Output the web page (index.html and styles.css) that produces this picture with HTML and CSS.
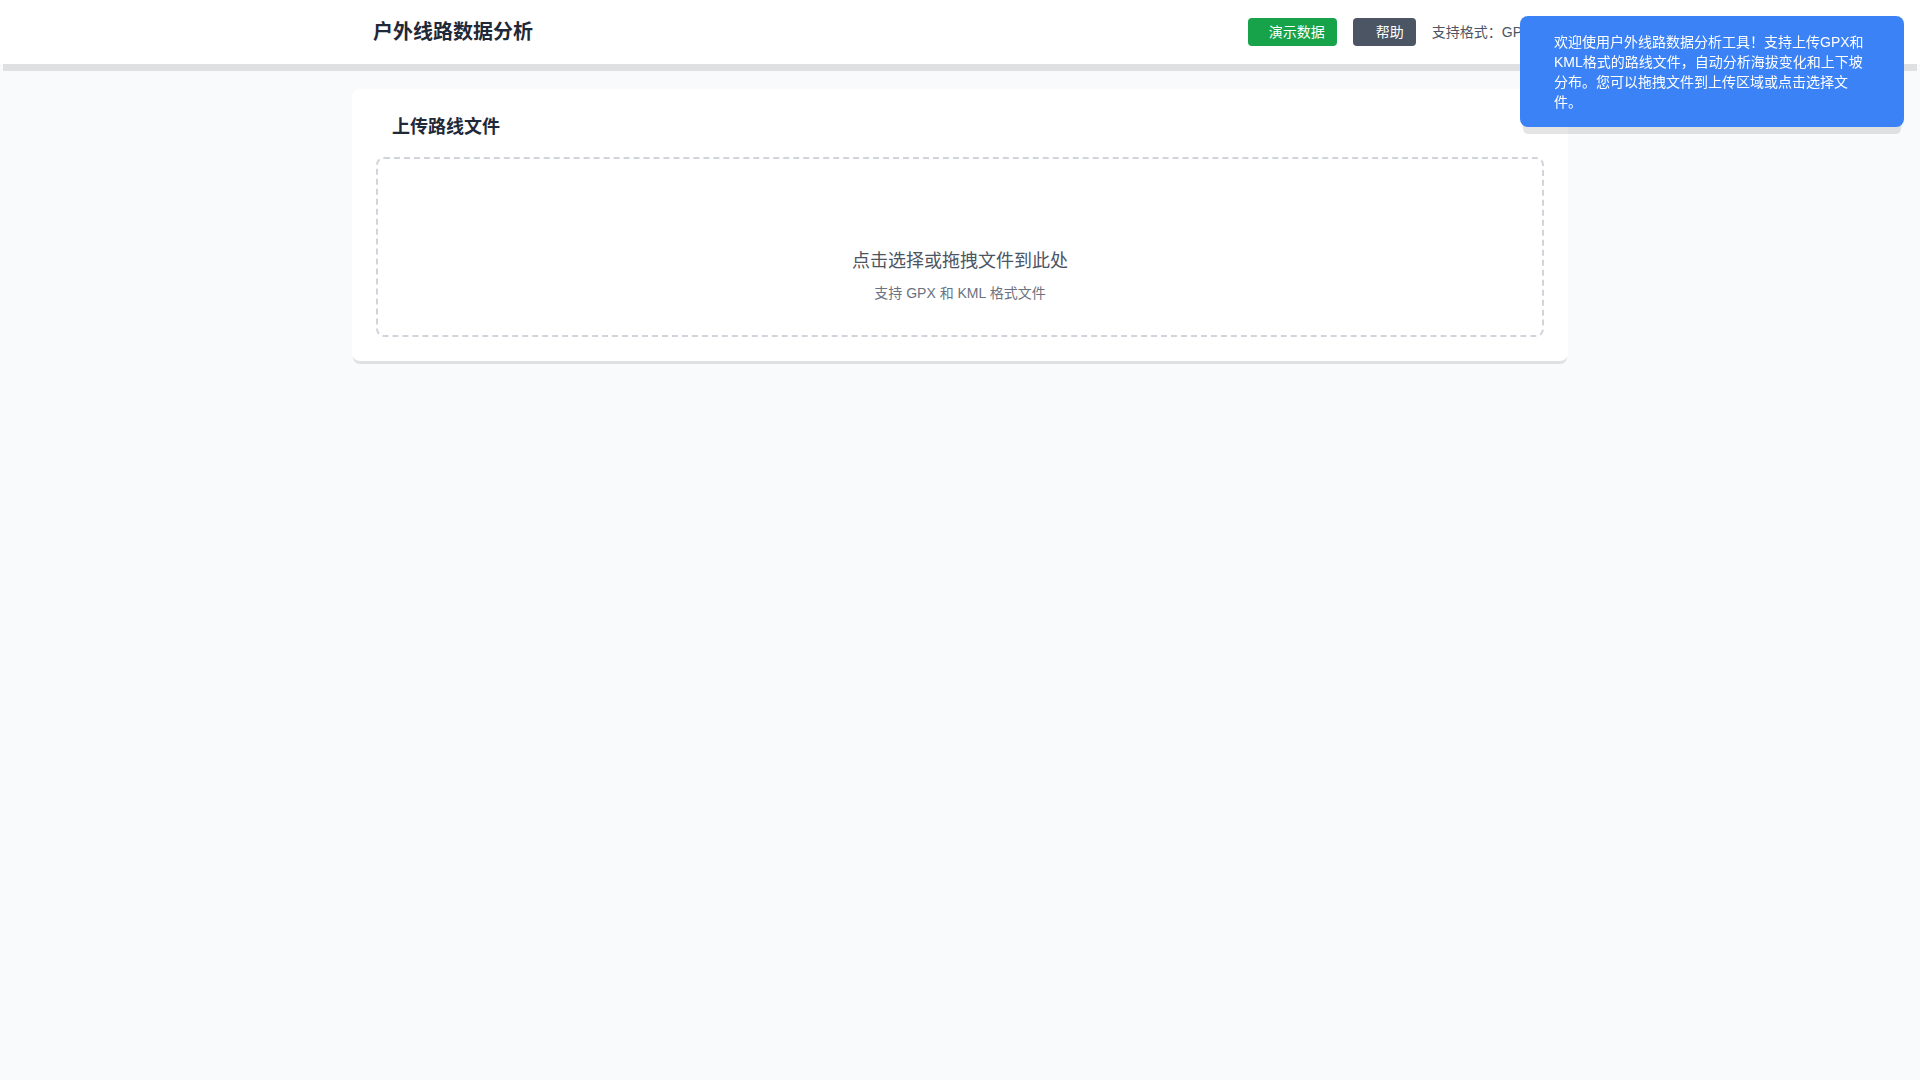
FILE: index.html
```html
<!DOCTYPE html>
<html>
<head>
	<title>户外线路数据分析</title>
	<meta charset="utf-8"/>
	<link rel="stylesheet" href="styles.css">
</head>
<body>

<div class="header">
	<div class="header-inner">
		<h1 class="logo"><i class="icon"></i>户外线路数据分析</h1>
		<div class="actions">
			<button class="btn btn-demo"><i class="icon"></i>演示数据</button>
			<button class="btn btn-help"><i class="icon"></i>帮助</button>
			<span class="formats">支持格式：GPX, KML</span>
		</div>
	</div>
</div>

<div class="main">
	<div class="card">
		<h2 class="card-title"><i class="icon"></i>上传路线文件</h2>
		<div class="drop">
			<div class="drop-icon"></div>
			<p class="drop-text">点击选择或拖拽文件到此处</p>
			<p class="drop-hint">支持 GPX 和 KML 格式文件</p>
		</div>
	</div>
</div>

<div class="toast">
	<i class="icon"></i>
	<p class="toast-text">欢迎使用户外线路数据分析工具！支持上传GPX和KML格式的路线文件，自动分析海拔变化和上下坡分布。您可以拖拽文件到上传区域或点击选择文件。</p>
</div>

</body>
</html>
```

FILE: styles.css
```css
* {
	margin: 0px;
	padding: 0px;
	box-sizing: border-box;
}

body {
	font-family: "Liberation Sans", "Noto Sans CJK SC", sans-serif;
	background-color: #f9fafb;
	color: #1f2937;
	min-height: 100vh;
}

.icon {
	display: inline-block;
}

/* 顶部栏 */
.header {
	background-color: #fff;
	box-shadow: 0 10px 0 -3px rgba(0, 0, 0, 0.1), 0 4px 0 -4px rgba(0, 0, 0, 0.1);
	position: relative;
	z-index: 1;
}
	.header-inner {
		max-width: 1280px;
		height: 64px;
		margin: 0 auto;
		padding: 0 32px;
		display: flex;
		align-items: center;
		justify-content: space-between;
	}
	.logo {
		font-size: 20px;
		line-height: 28px;
		font-weight: bold;
		color: #1f2937;
		padding-left: 21px;
	}
	.actions {
		display: flex;
		align-items: center;
	}
		.btn {
			font-family: inherit;
			font-size: 14px;
			line-height: 20px;
			color: #fff;
			border: none;
			border-radius: 4px;
			padding: 4px 12px 4px 21px;
			margin-right: 16px;
		}
		.btn-demo {
			background-color: #16a34a;
		}
		.btn-help {
			background-color: #4b5563;
			padding-left: 23px;
		}
		.formats {
			font-size: 14px;
			line-height: 20px;
			color: #4b5563;
		}

/* 主体 */
.main {
	max-width: 1280px;
	margin: 0 auto;
	padding: 25px 32px;
}
	.card {
		background-color: #fff;
		border-radius: 8px;
		padding: 24px;
		box-shadow: 0 4px 0 -1px rgba(0, 0, 0, 0.1), 0 2px 0 -2px rgba(0, 0, 0, 0.1);
	}
		.card-title {
			font-size: 18px;
			line-height: 28px;
			font-weight: bold;
			color: #1f2937;
			padding-left: 16px;
			margin-bottom: 16px;
		}
		.drop {
			border: 2px dashed #d1d5db;
			border-radius: 8px;
			padding: 32px;
			text-align: center;
		}
			.drop-icon {
				height: 40px;
				margin-bottom: 16px;
			}
			.drop-text {
				font-size: 18px;
				line-height: 28px;
				color: #4b5563;
				margin-bottom: 8px;
			}
			.drop-hint {
				font-size: 14px;
				line-height: 20px;
				color: #6b7280;
			}

/* 提示框 */
.toast {
	position: fixed;
	top: 16px;
	right: 16px;
	width: 384px;
	z-index: 20;
	display: flex;
	align-items: flex-start;
	background-color: #3b82f6;
	color: #fff;
	border-radius: 8px;
	padding: 16px 16px 15px 34px;
	box-shadow: 0 10px 0 -3px rgba(0, 0, 0, 0.1), 0 4px 0 -4px rgba(0, 0, 0, 0.1);
}
	.toast-text {
		width: 316px;
		font-size: 14px;
		line-height: 20px;
	}
```
